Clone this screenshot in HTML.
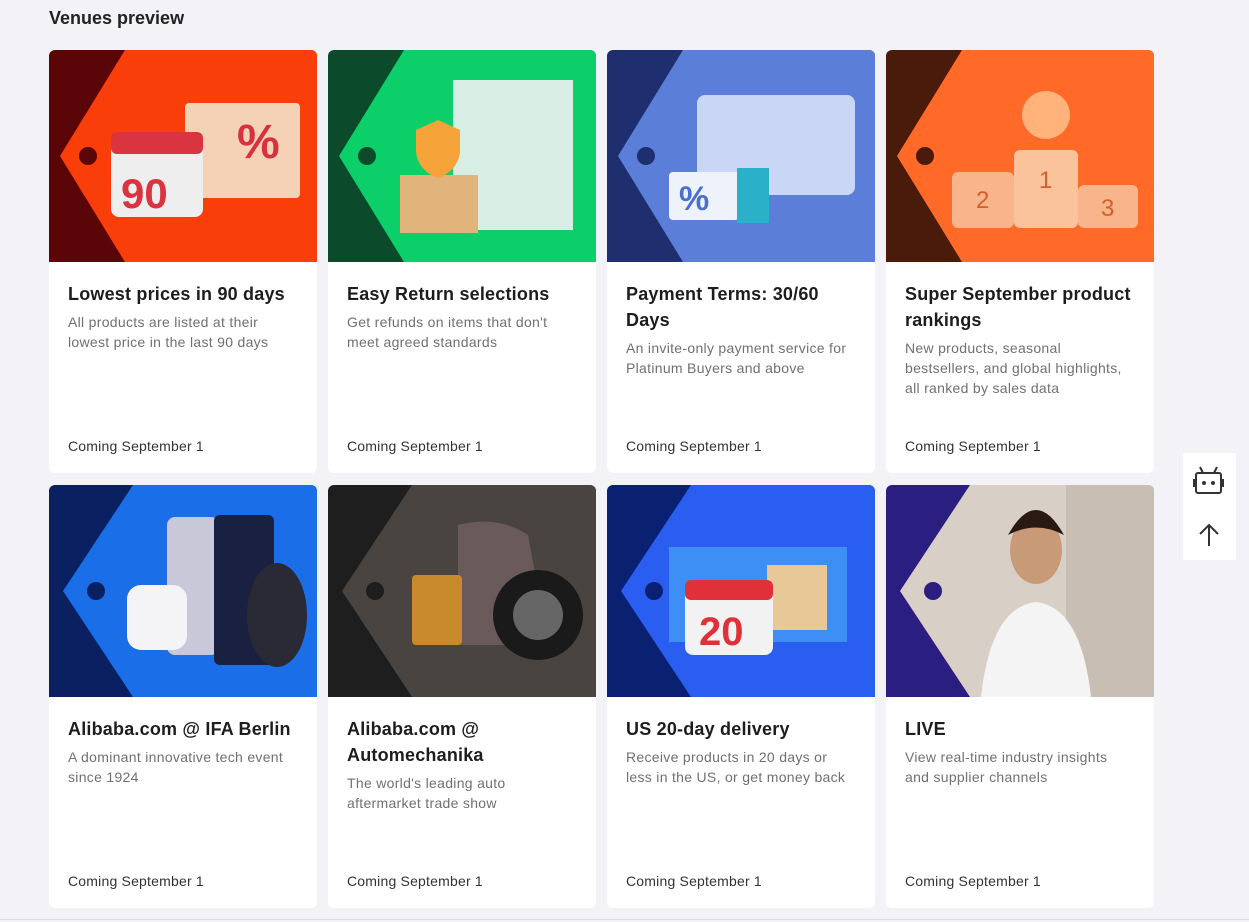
<!DOCTYPE html>
<html><head><meta charset="utf-8"><style>
*{margin:0;padding:0;box-sizing:border-box}
body{width:1249px;height:922px;background:#f3f3f7;font-family:"Liberation Sans",sans-serif;position:relative;overflow:hidden}
h2{position:absolute;left:49px;top:8px;font-size:18px;font-weight:bold;color:#222}
.card{position:absolute;width:268px;height:423px;background:#fff;border-radius:6px;overflow:hidden}
.img{position:relative;height:212px}
.img svg{position:absolute;left:0;top:0}
.t{position:absolute;left:19px;top:231px;width:232px;font-size:18px;font-weight:bold;color:#1d1d1d;line-height:26px;letter-spacing:0.2px}
.d{width:222px;font-size:14px;font-weight:normal;color:#707070;line-height:20px;margin-top:5px;letter-spacing:0.3px}
.c{position:absolute;left:19px;bottom:19px;font-size:14px;color:#333;letter-spacing:0.2px}
.side{position:absolute;left:1183px;top:453px;width:53px;height:107px;background:#fff}
</style></head><body>
<h2>Venues preview</h2>

<div class="card" style="left:49px;top:50px"><div class="img"><svg width="268" height="212"><rect width="268" height="212" fill="#5a0508"/><polygon points="76,0 268,0 268,212 76,212 11,106" fill="#f93e0a"/><circle cx="39" cy="106" r="9" fill="#5a0508"/><rect x="136" y="53" width="115" height="95" rx="4" fill="#f5d2b6"/><text x="188" y="108" font-size="48" font-weight="bold" fill="#d8303c" font-family="Liberation Sans">%</text><rect x="62" y="82" width="92" height="85" rx="8" fill="#eee"/><rect x="62" y="82" width="92" height="22" rx="6" fill="#d9343f"/><text x="72" y="158" font-size="42" font-weight="bold" fill="#d9343f" font-family="Liberation Sans">90</text></svg></div>
<div class="t">Lowest prices in 90 days<div class="d">All products are listed at their lowest price in the last 90 days</div></div><div class="c">Coming September 1</div></div>

<div class="card" style="left:328px;top:50px"><div class="img"><svg width="268" height="212"><rect width="268" height="212" fill="#0b4a2a"/><polygon points="76,0 268,0 268,212 76,212 11,106" fill="#0ccf6a"/><circle cx="39" cy="106" r="9" fill="#0b4a2a"/><rect x="125" y="30" width="120" height="150" fill="#d8eee4"/><rect x="72" y="125" width="78" height="58" fill="#e0b47a"/><path d="M88 80 l22-10 22 10 v20 c0 15-12 25-22 28 c-10-3-22-13-22-28z" fill="#f6a33a"/></svg></div>
<div class="t">Easy Return selections<div class="d">Get refunds on items that don't meet agreed standards</div></div><div class="c">Coming September 1</div></div>

<div class="card" style="left:607px;top:50px"><div class="img"><svg width="268" height="212"><rect width="268" height="212" fill="#1e2e6e"/><polygon points="76,0 268,0 268,212 76,212 11,106" fill="#5b7ed8"/><circle cx="39" cy="106" r="9" fill="#1e2e6e"/><rect x="90" y="45" width="158" height="100" rx="8" fill="#c9d6f5"/><rect x="62" y="122" width="70" height="48" rx="4" fill="#eef2fb"/><text x="72" y="160" font-size="34" font-weight="bold" fill="#4a6fcf" font-family="Liberation Sans">%</text><rect x="130" y="118" width="32" height="55" fill="#2ab0c8"/></svg></div>
<div class="t">Payment Terms: 30/60 Days<div class="d">An invite-only payment service for Platinum Buyers and above</div></div><div class="c">Coming September 1</div></div>

<div class="card" style="left:886px;top:50px"><div class="img"><svg width="268" height="212"><rect width="268" height="212" fill="#4a1a0a"/><polygon points="76,0 268,0 268,212 76,212 11,106" fill="#ff6a28"/><circle cx="39" cy="106" r="9" fill="#4a1a0a"/><rect x="66" y="122" width="62" height="56" rx="6" fill="#f8b48a"/><rect x="128" y="100" width="64" height="78" rx="6" fill="#fbc39c"/><rect x="192" y="135" width="60" height="43" rx="6" fill="#f8b48a"/><circle cx="160" cy="65" r="24" fill="#ffb27a"/><text x="90" y="158" font-size="24" fill="#d2602a">2</text><text x="153" y="138" font-size="24" fill="#d2602a">1</text><text x="215" y="166" font-size="24" fill="#d2602a">3</text></svg></div>
<div class="t">Super September product rankings<div class="d">New products, seasonal bestsellers, and global highlights, all ranked by sales data</div></div><div class="c">Coming September 1</div></div>

<div class="card" style="left:49px;top:485px"><div class="img"><svg width="268" height="212"><rect width="268" height="212" fill="#0a2060"/><polygon points="84,0 268,0 268,212 84,212 14,106" fill="#1a6ee8"/><circle cx="47" cy="106" r="9" fill="#0a2060"/><rect x="118" y="32" width="52" height="138" rx="8" fill="#c8c8d8"/><rect x="165" y="30" width="60" height="150" rx="6" fill="#1a2040"/><ellipse cx="228" cy="130" rx="30" ry="52" fill="#2a2a36"/><rect x="78" y="100" width="60" height="65" rx="14" fill="#f4f4f6"/></svg></div>
<div class="t">Alibaba.com @ IFA Berlin<div class="d">A dominant innovative tech event since 1924</div></div><div class="c">Coming September 1</div></div>

<div class="card" style="left:328px;top:485px"><div class="img"><svg width="268" height="212"><rect width="268" height="212" fill="#1e1e1e"/><polygon points="84,0 268,0 268,212 84,212 14,106" fill="#4a4440"/><circle cx="47" cy="106" r="9" fill="#1e1e1e"/><path d="M130 40 q40-10 70 10 l20 110 h-90z" fill="#6a5a5a"/><circle cx="210" cy="130" r="45" fill="#1a1a1a"/><circle cx="210" cy="130" r="25" fill="#666"/><rect x="84" y="90" width="50" height="70" rx="4" fill="#c88a2a"/></svg></div>
<div class="t">Alibaba.com @ Automechanika<div class="d">The world's leading auto aftermarket trade show</div></div><div class="c">Coming September 1</div></div>

<div class="card" style="left:607px;top:485px"><div class="img"><svg width="268" height="212"><rect width="268" height="212" fill="#0a2070"/><polygon points="84,0 268,0 268,212 84,212 14,106" fill="#2a5ef0"/><circle cx="47" cy="106" r="9" fill="#0a2070"/><rect x="62" y="62" width="178" height="95" fill="#3d8ef5"/><rect x="160" y="80" width="60" height="65" fill="#e8c896"/><rect x="78" y="95" width="88" height="75" rx="8" fill="#f2f2f2"/><rect x="78" y="95" width="88" height="20" rx="6" fill="#e0303a"/><text x="92" y="160" font-size="40" font-weight="bold" fill="#e0303a" font-family="Liberation Sans">20</text></svg></div>
<div class="t">US 20-day delivery<div class="d">Receive products in 20 days or less in the US, or get money back</div></div><div class="c">Coming September 1</div></div>

<div class="card" style="left:886px;top:485px"><div class="img"><svg width="268" height="212"><rect width="268" height="212" fill="#2a1e80"/><polygon points="84,0 268,0 268,212 84,212 14,106" fill="#d8d0c6"/><rect x="180" y="0" width="88" height="212" fill="#c8beb4"/><circle cx="47" cy="106" r="9" fill="#2a1e80"/><path d="M95 212 q10-90 55-95 q45 5 55 95z" fill="#f4f4f4"/><ellipse cx="150" cy="65" rx="26" ry="34" fill="#c99a78"/><path d="M122 50 q28-50 56 0 q-28-15-56 0z" fill="#2a1a14"/></svg></div>
<div class="t">LIVE<div class="d">View real-time industry insights and supplier channels</div></div><div class="c">Coming September 1</div></div>

<div class="side"><svg width="53" height="107" fill="none" stroke="#333" stroke-width="2"><rect x="13" y="20" width="25" height="20" rx="2"/><path d="M20 20 l-3-6 M31 20 l3-6 M11 26 v8 M40 26 v8"/><circle cx="21" cy="30" r="1" fill="#333"/><circle cx="30" cy="30" r="1" fill="#333"/><path d="M26 93 V72 M17 81 l9-9 9 9"/></svg></div>
<div style="position:absolute;left:0;top:919px;width:1249px;height:1px;background:#ddd"></div>
</body></html>
